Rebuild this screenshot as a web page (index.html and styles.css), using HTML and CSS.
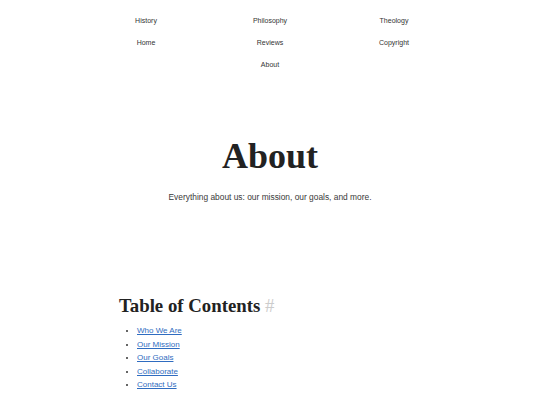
FILE: index.html
```html
<!DOCTYPE html>
<html>
<head>
<meta charset="utf-8">
<link rel="stylesheet" href="styles.css">
</head>
<body>
<nav class="nav">
  <a class="nav-link" href="#">History</a>
  <a class="nav-link" href="#">Philosophy</a>
  <a class="nav-link" href="#">Theology</a>
  <a class="nav-link" href="#">Home</a>
  <a class="nav-link" href="#">Reviews</a>
  <a class="nav-link" href="#">Copyright</a>
  <a class="nav-link nav-center" href="#">About</a>
</nav>
<header class="hero">
  <h1 class="hero-title">About</h1>
  <p class="hero-sub">Everything about us: our mission, our goals, and more.</p>
</header>
<main class="content">
  <h2 class="toc-title">Table of Contents <span class="anchor">#</span></h2>
  <ul class="toc">
    <li><a href="#">Who We Are</a></li>
    <li><a href="#">Our Mission</a></li>
    <li><a href="#">Our Goals</a></li>
    <li><a href="#">Collaborate</a></li>
    <li><a href="#">Contact Us</a></li>
  </ul>
</main>
</body>
</html>
```
FILE: styles.css
```css
html, body {
  margin: 0;
  padding: 0;
  background: #fff;
}
body {
  font-family: "Liberation Sans", Arial, sans-serif;
  color: #333;
}
.nav {
  display: grid;
  grid-template-columns: repeat(3, 124px);
  justify-content: center;
  grid-auto-rows: 22px;
  padding-top: 10px;
}
.nav-link {
  font-size: 7px;
  line-height: 22px;
  height: 22px;
  color: #333;
  text-decoration: none;
  text-align: center;
}
.nav-center {
  grid-column: 2;
}
.hero {
  text-align: center;
  padding-top: 60px;
}
.hero-title {
  font-family: "Liberation Serif", "Times New Roman", serif;
  font-weight: bold;
  font-size: 36px;
  line-height: 40px;
  margin: 0;
  color: #222;
}
.hero-sub {
  font-size: 8.4px;
  margin: 16px 0 0;
  color: #3a3a3a;
}
.content {
  width: 302px;
  margin: 93px auto 0;
}
.toc-title {
  font-family: "Liberation Serif", "Times New Roman", serif;
  font-weight: bold;
  font-size: 18.8px;
  line-height: 22px;
  margin: 0;
  color: #222;
}
.anchor {
  font-weight: normal;
  color: #ccc;
}
.toc {
  margin: 7px 0 0;
  padding-left: 18px;
  font-size: 8px;
  line-height: 13.6px;
}
.toc a {
  color: #2f6cc0;
}
```
